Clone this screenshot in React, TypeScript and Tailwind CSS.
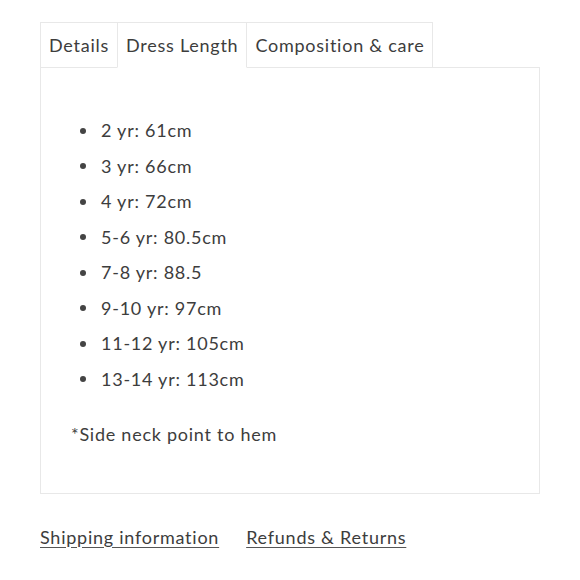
const sizes = [
  "2 yr: 61cm",
  "3 yr: 66cm",
  "4 yr: 72cm",
  "5-6 yr: 80.5cm",
  "7-8 yr: 88.5",
  "9-10 yr: 97cm",
  "11-12 yr: 105cm",
  "13-14 yr: 113cm",
];

const tabs = ["Details", "Dress Length", "Composition & care"];

export default function App() {
  const active = 1;
  return (
    <div className="min-h-screen bg-white px-10 pt-[22px] text-[18px] tracking-[0.75px] text-[#3d3d3d] font-['Lato','Noto_Sans',sans-serif]">
      <div className="flex">
        {tabs.map((t, i) => (
          <div
            key={t}
            className={`h-[46px] flex items-center px-[8px] border border-[#e8e8e8] -ml-px first:ml-0 ${
              i === active ? "border-b-white bg-white relative z-10" : "bg-white"
            }`}
          >
            {t}
          </div>
        ))}
      </div>
      <div className="-mt-px w-[500px] border border-[#e8e8e8] pt-[45px] pb-[40px] px-[30px]">
        <ul className="pl-[9px] leading-[35.5px]">
          {sizes.map((s) => (
            <li key={s} className="flex items-center gap-[15px]">
              <span className="w-[6px] h-[6px] rounded-full bg-[#444] shrink-0" />
              {s}
            </li>
          ))}
        </ul>
        <p className="mt-[20px] leading-[35.5px]">*Side neck point to hem</p>
      </div>
      <div className="mt-[29px] flex gap-[27px] leading-[28px]">
        <a className="underline underline-offset-[3px] decoration-[#555]">Shipping information</a>
        <a className="underline underline-offset-[3px] decoration-[#555]">Refunds &amp; Returns</a>
      </div>
    </div>
  );
}
